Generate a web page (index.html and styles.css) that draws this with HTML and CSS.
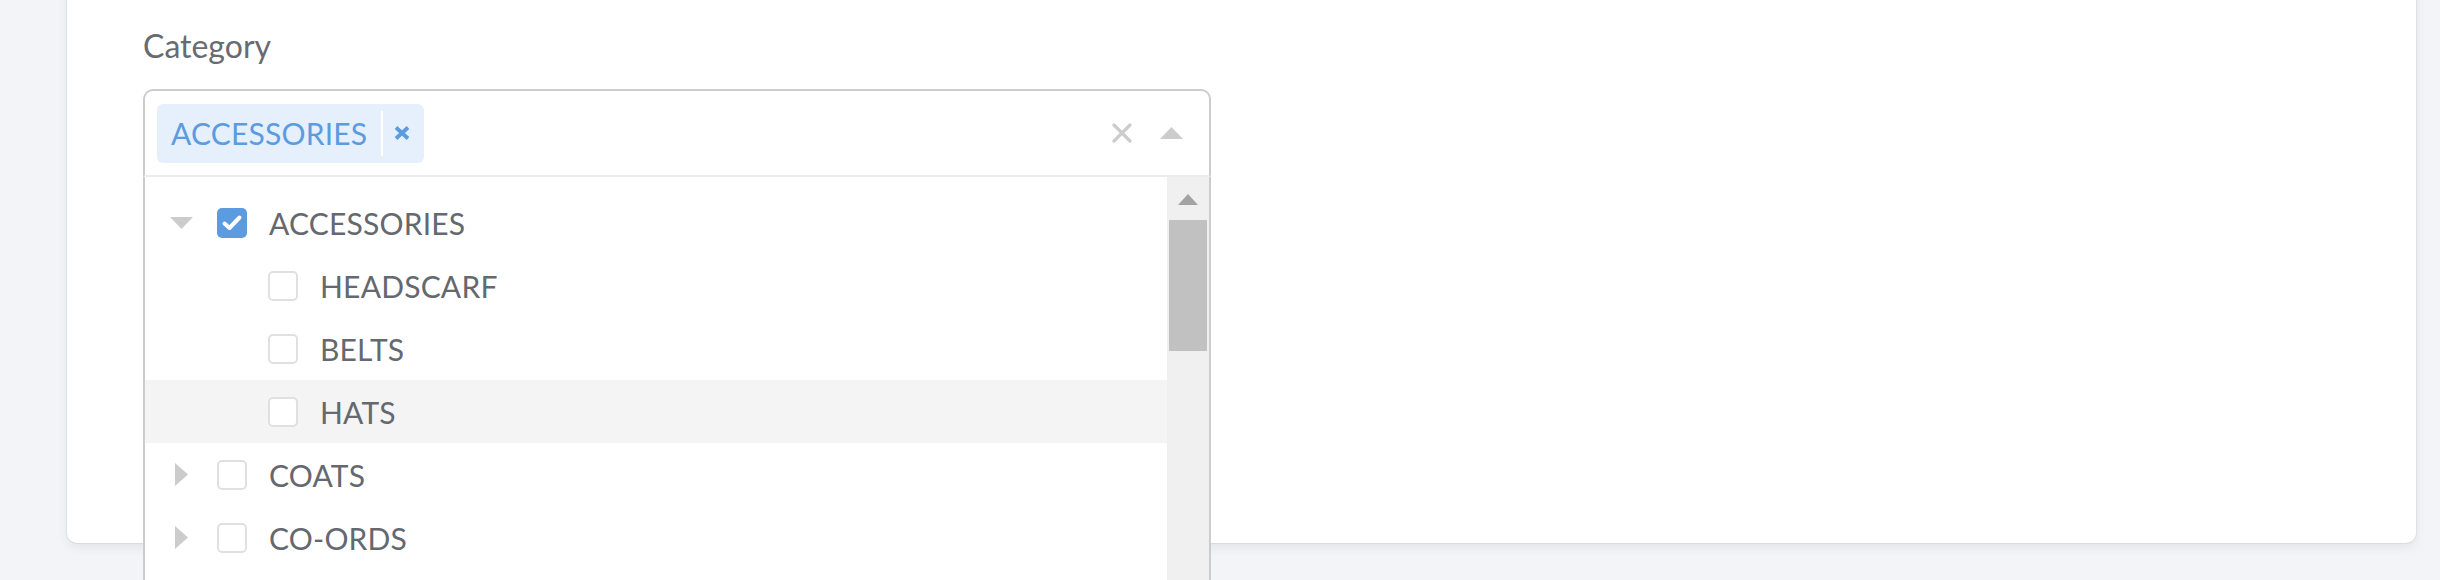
FILE: index.html
```html
<!DOCTYPE html>
<html>
<head>
<meta charset="utf-8">
<link rel="stylesheet" href="styles.css">
</head>
<body>
<div class="card">
  <div class="field">
    <label class="label">Category</label>
    <div class="select">
      <div class="control">
        <div class="values">
          <span class="tag">
            <span class="tag-text">ACCESSORIES</span>
            <span class="tag-remove">
              <svg width="16" height="14" viewBox="0 0 16 14"><path d="M2 1.5 L14 12.5 M14 1.5 L2 12.5" stroke="#5b9be0" stroke-width="3.8" stroke-linecap="butt"/></svg>
            </span>
          </span>
        </div>
        <div class="indicators">
          <svg class="clear" width="20" height="20" viewBox="0 0 20 20"><path d="M2 2 L18 18 M18 2 L2 18" stroke="#cccccc" stroke-width="3.2" stroke-linecap="round"/></svg>
          <svg class="caret" width="23" height="12" viewBox="0 0 23 12"><path d="M0 12 L11.5 0 L23 12 Z" fill="#cccccc"/></svg>
        </div>
      </div>
      <div class="menu">
        <div class="options">
          <div class="row">
            <span class="toggle"><svg width="23" height="12" viewBox="0 0 23 12"><path d="M0 0 L23 0 L11.5 12 Z" fill="#cccccc"/></svg></span>
            <span class="box checked"><svg width="30" height="30" viewBox="0 0 30 30"><path d="M7.5 15.5 L12.5 20 L22.5 9.5" fill="none" stroke="#ffffff" stroke-width="4" stroke-linecap="round" stroke-linejoin="round"/></svg></span>
            <span class="name">ACCESSORIES</span>
          </div>
          <div class="row child">
            <span class="toggle"></span>
            <span class="box"></span>
            <span class="name">HEADSCARF</span>
          </div>
          <div class="row child">
            <span class="toggle"></span>
            <span class="box"></span>
            <span class="name">BELTS</span>
          </div>
          <div class="row child focused">
            <span class="toggle"></span>
            <span class="box"></span>
            <span class="name">HATS</span>
          </div>
          <div class="row">
            <span class="toggle"><svg width="13" height="23" viewBox="0 0 13 23"><path d="M0 0 L13 11.5 L0 23 Z" fill="#cccccc"/></svg></span>
            <span class="box"></span>
            <span class="name">COATS</span>
          </div>
          <div class="row">
            <span class="toggle"><svg width="13" height="23" viewBox="0 0 13 23"><path d="M0 0 L13 11.5 L0 23 Z" fill="#cccccc"/></svg></span>
            <span class="box"></span>
            <span class="name">CO-ORDS</span>
          </div>
        </div>
        <div class="scrollbar">
          <div class="sb-button"><svg width="20" height="11" viewBox="0 0 20 11"><path d="M0 11 L10 0 L20 11 Z" fill="#a3a3a3"/></svg></div>
          <div class="sb-thumb"></div>
        </div>
      </div>
    </div>
  </div>
</div>
</body>
</html>
```
FILE: styles.css
```css
html, body {
  margin: 0;
  padding: 0;
}
body {
  background: #f3f4f7;
  font-family: Lato, "Open Sans", sans-serif;
  min-height: 580px;
}
.card {
  margin: -20px 24px 0 67px;
  height: 563px;
  box-sizing: border-box;
  padding: 46px 0 0 76px;
  background: #ffffff;
  border-radius: 10px;
  box-shadow: 0 0 0 1px rgba(0, 0, 0, 0.05), 0 4px 12px rgba(0, 0, 0, 0.07);
}
.field {
  display: flex;
  flex-direction: column;
  gap: 23px;
}
.label {
  display: block;
  font-size: 32px;
  line-height: 40px;
  color: #676b72;
}
.select {
  position: relative;
  width: 1068px;
}
.control {
  height: 88px;
  box-sizing: border-box;
  border: 2px solid #cccccc;
  border-bottom-color: #ececec;
  border-radius: 10px 10px 0 0;
  display: flex;
  align-items: center;
  padding: 0 26px 0 12px;
}
.values {
  flex: 1;
  display: flex;
}
.tag {
  display: flex;
  align-items: center;
  height: 59px;
  background: #e6f0fc;
  border-radius: 6px;
  padding: 0 14px;
}
.tag-text {
  font-size: 30px;
  color: #5b9be0;
  padding-right: 14px;
  letter-spacing: 0.2px;
}
.tag-remove {
  display: flex;
  align-items: center;
  align-self: stretch;
  margin: 7px 0;
  padding-left: 11px;
  border-left: 2px solid #ffffff;
}
.indicators {
  display: flex;
  align-items: center;
  gap: 28px;
}
.menu {
  position: absolute;
  top: 100%;
  left: 0;
  right: 0;
  height: 403px;
  display: flex;
  background: #ffffff;
  border-left: 2px solid #cccccc;
  border-right: 2px solid #cccccc;
  overflow: hidden;
}
.options {
  flex: 1;
  padding-top: 14px;
}
.row {
  height: 63px;
  display: flex;
  align-items: center;
  padding-left: 25px;
}
.row.child {
  padding-left: 76px;
}
.row.focused {
  background: #f4f4f4;
}
.toggle {
  width: 23px;
  display: flex;
  justify-content: center;
  align-items: center;
  margin-right: 24px;
}
.box {
  width: 30px;
  height: 30px;
  box-sizing: border-box;
  border: 2px solid #e0e0e0;
  border-radius: 5px;
  background: #ffffff;
  margin-right: 22px;
  display: flex;
}
.box.checked {
  border: none;
  background: #5c9be0;
}
.name {
  font-size: 30px;
  color: #64686f;
  letter-spacing: 0.2px;
}
.scrollbar {
  width: 42px;
  background: #f0f0f0;
  display: flex;
  flex-direction: column;
  align-items: center;
}
.sb-button {
  height: 43px;
  display: flex;
  align-items: center;
  justify-content: center;
  padding-top: 2px;
  box-sizing: border-box;
}
.sb-thumb {
  width: 38px;
  height: 131px;
  background: #c1c1c1;
}
```
